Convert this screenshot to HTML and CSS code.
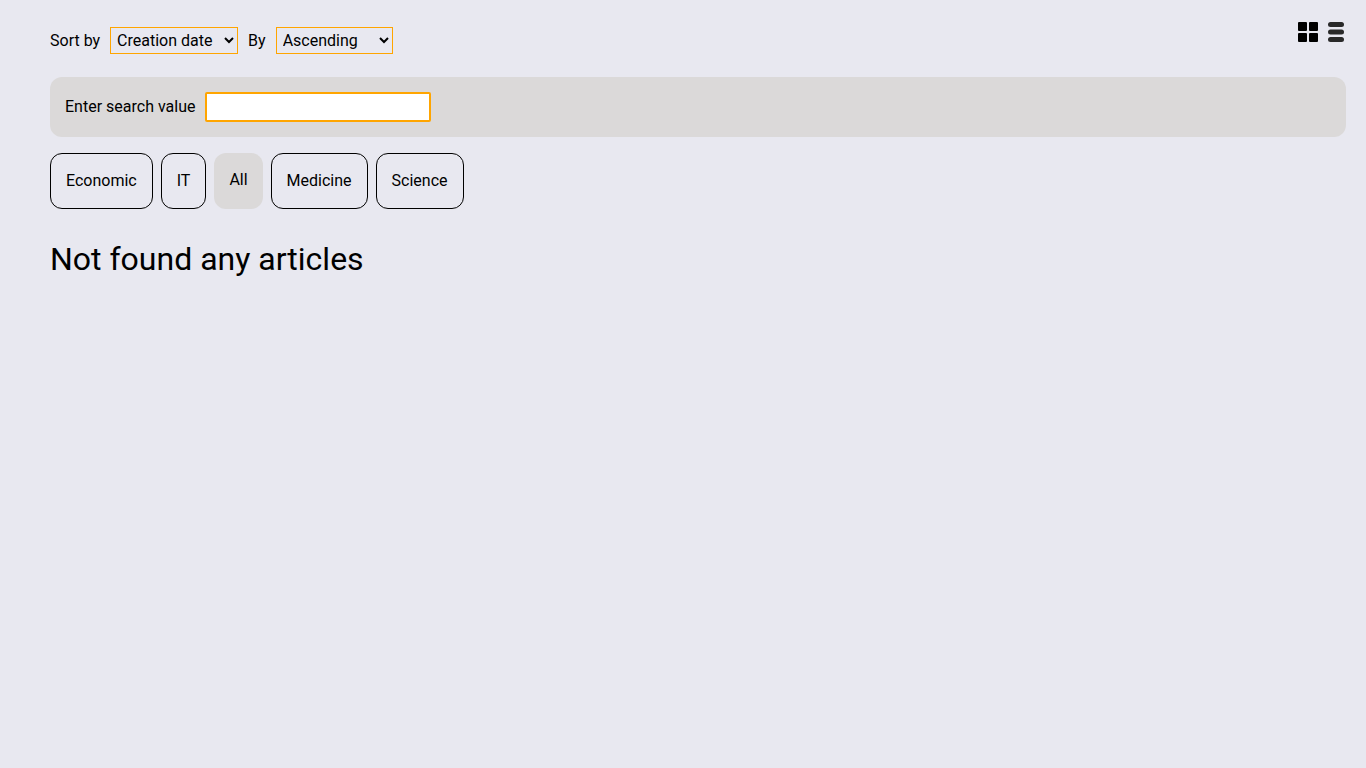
FILE: index.html
```html
<!DOCTYPE html>
<html lang="en">
<head>
<meta charset="utf-8">
<title>Articles</title>
<link rel="stylesheet" href="styles.css">
</head>
<body>
<main class="page">
  <div class="toolbar">
    <div class="sort">
      <label class="field"><span>Sort by</span>
        <select class="select select-field"><option>Creation date</option><option>Title</option><option>Views</option></select>
      </label>
      <label class="field"><span>By</span>
        <select class="select select-order"><option>Ascending</option><option>Descending</option></select>
      </label>
    </div>
    <div class="views">
      <button class="view" type="button" aria-label="Grid view">
        <svg width="20" height="20" viewBox="0 0 20 20"><rect width="9" height="9" rx="1"/><rect x="11" width="9" height="9" rx="1"/><rect y="11" width="9" height="9" rx="1"/><rect x="11" y="11" width="9" height="9" rx="1"/></svg>
      </button>
      <button class="view view-muted" type="button" aria-label="List view">
        <svg width="20" height="20" viewBox="0 0 20 20"><rect x="2" width="16" height="5" rx="2.500"/><rect x="2" y="7.500" width="16" height="5" rx="2.500"/><rect x="2" y="15" width="16" height="5" rx="2.500"/></svg>
      </button>
    </div>
  </div>
  <div class="search">
    <label class="field"><span>Enter search value</span><input class="input" type="text" autofocus></label>
  </div>
  <div class="tabs">
    <button class="tab" type="button">Economic</button>
    <button class="tab" type="button">IT</button>
    <button class="tab tab-active" type="button">All</button>
    <button class="tab" type="button">Medicine</button>
    <button class="tab" type="button">Science</button>
  </div>
  <p class="empty">Not found any articles</p>
</main>
</body>
</html>
```
FILE: styles.css
```css
* { box-sizing: border-box; }
body {
  margin: 0;
  background: #e8e8f0;
  color: #000;
  font: 16px/24px Roboto, sans-serif;
}
.page { padding: 20px 20px 20px 50px; }
.toolbar { display: flex; justify-content: space-between; align-items: flex-start; }
.sort { display: flex; gap: 10px; padding-top: 7px; }
.field { display: flex; align-items: center; gap: 10px; }
.select {
  height: 27px;
  padding: 0 2px;
  border: 1px solid orange;
  border-radius: 0;
  background: transparent;
  color: #000;
  font: 16px Roboto, sans-serif;
}
.select-field { width: 128px; }
.select-order { width: 117px; }
.views { display: flex; gap: 8px; padding-top: 2px; }
.view { display: flex; padding: 0; border: 0; background: none; fill: #000; }
.view-muted { fill: #292929; }
.search { margin-top: 23px; padding: 15px; border-radius: 12px; background: #dbd9d9; }
.input {
  width: 226px;
  height: 30px;
  padding: 0 4px;
  border: 2px solid orange;
  border-radius: 2px;
  outline: none;
  background: #fff;
  font: 16px Roboto, sans-serif;
  caret-color: transparent;
}
.tabs { display: flex; gap: 8px; margin-top: 16px; }
.tab {
  height: 56px;
  padding: 0 15px;
  border: 1px solid #000;
  border-radius: 12px;
  background: none;
  color: #000;
  font: 16px/24px Roboto, sans-serif;
}
.tab-active { padding-bottom: 2px; border: 0; background: #dbd9d9; }
.empty { margin: 30px 0 0; font-size: 32px; line-height: 40px; }
```
